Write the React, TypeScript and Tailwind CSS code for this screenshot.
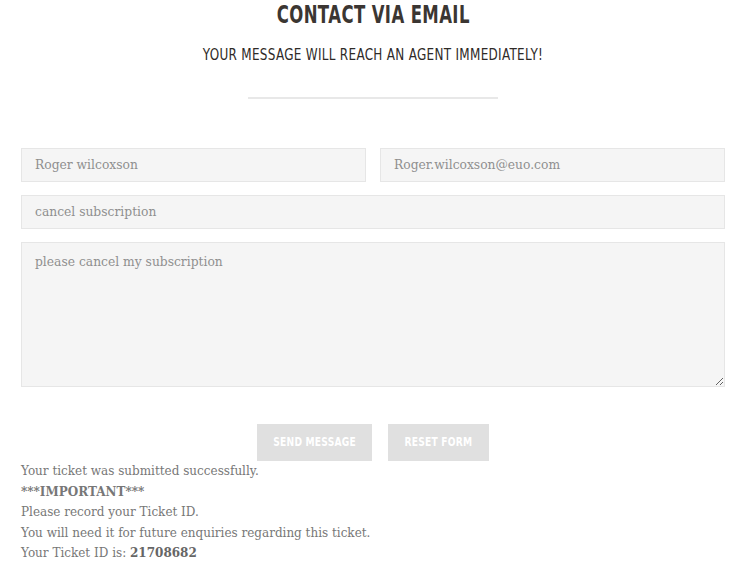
import React from 'react';

const heading = "font-['DejaVu_Sans',sans-serif]";
const body = "font-['DejaVu_Serif','Liberation_Serif',serif]";

const inputCls = `w-full h-[34px] px-[13px] bg-[#f5f5f5] border border-[#e6e6e6] text-[12.3px] text-[#8f8f8f] outline-none ${body}`;

const App: React.FC = () => {
  return (
    <div className={`min-h-[567px] bg-white ${body}`}>
      {/* Header */}
      <div className="flex flex-col items-center">
        <h2 className={`${heading} text-[25px] font-bold tracking-[0.6px] text-[#3b3632] leading-[30px]`}>
          <span className="inline-block scale-x-[0.66]">CONTACT VIA EMAIL</span>
        </h2>
        <p className={`${heading} mt-[15px] text-[16px] tracking-[0.4px] text-[#2e2a27] leading-[20px]`}>
          <span className="inline-block scale-x-[0.75]">YOUR MESSAGE WILL REACH AN AGENT IMMEDIATELY!</span>
        </p>
        <div className="mt-[32px] w-[250px] h-[2px] bg-[#e8e8e8]" />
      </div>

      {/* Form */}
      <form className="px-[21px] pt-[49px]" onSubmit={(e) => e.preventDefault()}>
        <div className="grid grid-cols-2 gap-[14px]">
          <input className={inputCls} defaultValue="Roger wilcoxson" />
          <input className={inputCls} defaultValue="Roger.wilcoxson@euo.com" />
        </div>
        <input className={`${inputCls} mt-[13px]`} defaultValue="cancel subscription" />
        <textarea
          className={`w-full h-[145px] mt-[13px] px-[13px] py-[10px] bg-[#f5f5f5] border border-[#e6e6e6] text-[12.3px] text-[#8f8f8f] outline-none block ${body}`}
          defaultValue="please cancel my subscription"
        />

        <div className="flex justify-center gap-[16px] mt-[37px]">
          <button className={`${heading} w-[115px] h-[37px] bg-[#e0e0e0] text-white font-bold text-[12.5px] tracking-[0.3px]`}>
            <span className="inline-block scale-x-[0.73]">SEND MESSAGE</span>
          </button>
          <button className={`${heading} w-[101px] h-[37px] bg-[#e0e0e0] text-white font-bold text-[12.5px] tracking-[0.3px]`}>
            <span className="inline-block scale-x-[0.73]">RESET FORM</span>
          </button>
        </div>
      </form>

      {/* Result */}
      <div className="px-[21px] text-[12px] leading-[20.5px] text-[#777]">
        <p>Your ticket was submitted successfully.</p>
        <p className="font-bold">***IMPORTANT***</p>
        <p>Please record your Ticket ID.</p>
        <p>You will need it for future enquiries regarding this ticket.</p>
        <p>
          Your Ticket ID is: <span className="font-bold text-[#666]">21708682</span>
        </p>
      </div>
    </div>
  );
};

export default App;
